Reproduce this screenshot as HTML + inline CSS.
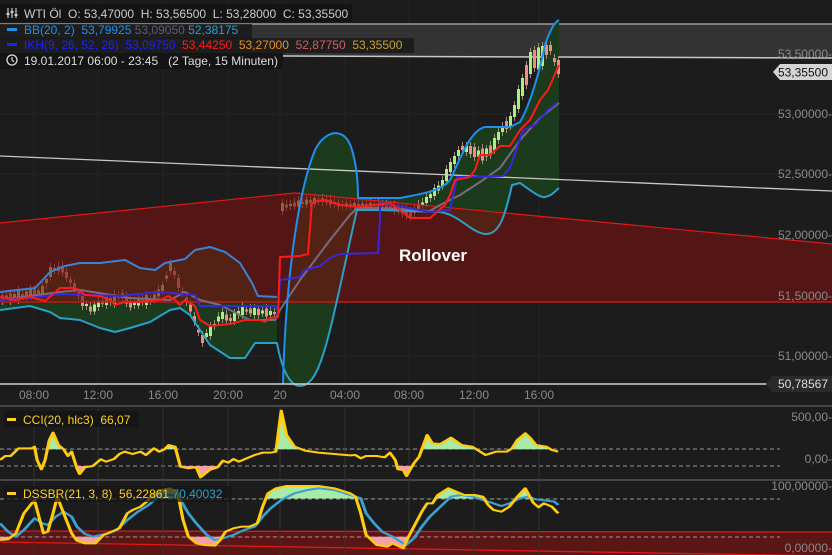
<!DOCTYPE html>
<html><head><meta charset="utf-8"><style>
html,body{margin:0;padding:0;background:#1c1c1c;}
svg{display:block;font-family:"Liberation Sans",sans-serif;}
.g{fill:#a6f27a}.p{fill:#f28c7c}
</style></head><body>
<svg width="832" height="555" viewBox="0 0 832 555" xmlns="http://www.w3.org/2000/svg">
<rect width="832" height="555" fill="#1c1c1c"/>
<g stroke="#242424" stroke-width="1">
<line x1="0" y1="114" x2="832" y2="114"/><line x1="0" y1="174" x2="832" y2="174"/><line x1="0" y1="235" x2="832" y2="235"/><line x1="0" y1="296" x2="832" y2="296"/><line x1="0" y1="356" x2="832" y2="356"/>
<line x1="34" y1="0" x2="34" y2="384"/><line x1="98" y1="0" x2="98" y2="384"/><line x1="163" y1="0" x2="163" y2="384"/><line x1="228" y1="0" x2="228" y2="384"/><line x1="280" y1="0" x2="280" y2="384"/><line x1="345" y1="0" x2="345" y2="384"/><line x1="409" y1="0" x2="409" y2="384"/><line x1="474" y1="0" x2="474" y2="384"/><line x1="539" y1="0" x2="539" y2="384"/>
</g>
<polygon points="0,24 832,24 832,58 0,55" fill="#333"/>
<line x1="0" y1="24" x2="832" y2="24" stroke="#9a9a9a" stroke-width="1.5"/>
<line x1="0" y1="55" x2="832" y2="58" stroke="#c8c8c8" stroke-width="1.5"/>
<g fill="#1c3a1c">
<path d="M0,292 L35,288 L50,272 L65,266 L80,263 L100,263 L125,260 L140,268 L155,270 L165,263 L185,259 L195,250 L210,247 L225,252 L240,263 L252,283 L258,296 L277,297 L277,343 L255,343 L245,358 L230,358 L210,345 L200,330 L190,315 L180,308 L170,310 L150,322 L130,328 L115,332 L100,328 L80,320 L60,318 L50,312 L30,306 L0,310 Z"/>
<path d="M283,384 C285,300 295,200 315,150 C325,130 345,125 352,150 C358,170 358,190 358,198 L357,210 C352,230 340,290 330,330 C320,370 312,386 300,386 C290,386 285,384 283,384 Z"/>
<path d="M358,198 L400,198 C420,194 440,192 450,180 C460,160 470,130 485,127 L510,127 L520,122 C530,105 540,70 545,45 C550,30 555,22 559,20 L559,188 C556,190 552,196 545,197 C540,198 530,190 520,183 L512,185 C505,215 500,235 485,234 C470,232 460,215 440,212 L380,210 L357,210 Z"/>
</g>
<!-- candles -->
<path fill="none" stroke="#9a8a80" stroke-width="1" d="M2.5,291v14M6.5,291v9M10.5,289v16M14.5,290v12M18.5,286v18M22.5,290v10M26.5,288v13M30.5,285v15M34.5,285v14M38.5,287v11M42.5,282v16M46.5,275v14M50.5,263v18M54.5,264v10M58.5,262v13M62.5,261v15M66.5,268v14M70.5,276v11M74.5,279v16M78.5,288v12M82.5,292v18M86.5,300v10M90.5,302v13M94.5,300v15M98.5,297v14M102.5,296v11M106.5,293v16M110.5,294v12M114.5,290v18M118.5,291v10M122.5,289v13M126.5,292v15M130.5,297v14M134.5,298v11M138.5,293v16M142.5,294v12M146.5,291v18M150.5,295v10M154.5,290v13M158.5,285v15M162.5,281v14M166.5,271v11M170.5,259v16M174.5,267v12M178.5,274v18M182.5,287v10M186.5,293v13M190.5,300v15M194.5,312v14M198.5,325v11M202.5,331v16M206.5,329v12M210.5,322v18M214.5,320v10M218.5,312v13M222.5,308v15M226.5,310v14M230.5,314v11M234.5,309v16M238.5,307v12M242.5,301v18M246.5,305v10M250.5,304v13M254.5,304v15M258.5,305v14M262.5,306v11M266.5,304v16M270.5,307v12M274.5,308v10M282.5,199v16M286.5,200v11M290.5,200v10M294.5,198v12M298.5,196v14M302.5,198v10M306.5,195v13M310.5,196v11M314.5,194v14M318.5,195v10M322.5,194v12M326.5,195v11M330.5,195v13M334.5,198v10M338.5,199v12M342.5,200v10M346.5,199v11M350.5,200v10M354.5,199v12M358.5,200v10M362.5,199v11M366.5,200v10M370.5,199v12M374.5,200v10M378.5,199v11M382.5,200v10M386.5,200v12M390.5,201v11M394.5,201v14M398.5,203v12M402.5,203v15M406.5,204v16M410.5,207v14M414.5,205v12M418.5,200v13M422.5,198v11M426.5,193v14M430.5,190v12M434.5,184v16M438.5,181v13M442.5,176v14M446.5,165v20M450.5,158v18M454.5,152v16M458.5,146v14M462.5,142v12M466.5,142v14M470.5,142v16M474.5,143v18M478.5,146v14M482.5,144v20M486.5,145v16M490.5,141v18M494.5,134v20M498.5,128v16M502.5,122v14M506.5,117v16M510.5,112v18M514.5,101v20M518.5,85v28M522.5,74v26M526.5,61v28M530.5,48v30M534.5,46v26M538.5,43v30M542.5,42v28M546.5,41v18M550.5,41v14M554.5,54v12M558.5,56v22"/>
<g>
<rect class="p" x="1" y="295" width="3" height="6"/><rect class="g" x="5" y="295.5" width="3" height="3"/><rect class="p" x="9" y="293" width="3" height="8"/><rect class="g" x="13" y="294" width="3" height="4"/><rect class="g" x="17" y="290.5" width="3" height="10"/><rect class="p" x="21" y="294" width="3" height="2"/><rect class="g" x="25" y="291.5" width="3" height="5"/><rect class="g" x="29" y="289.5" width="3" height="7"/><rect class="p" x="33" y="289.5" width="3" height="6"/><rect class="g" x="37" y="290.5" width="3" height="3"/><rect class="g" x="41" y="286" width="3" height="8"/><rect class="g" x="45" y="279" width="3" height="4"/><rect class="g" x="49" y="267" width="3" height="10"/><rect class="g" x="53" y="268" width="3" height="2"/><rect class="p" x="57" y="266" width="3" height="5"/><rect class="p" x="61" y="265.5" width="3" height="7"/><rect class="p" x="65" y="272" width="3" height="6"/><rect class="p" x="69" y="279.5" width="3" height="3"/><rect class="p" x="73" y="283" width="3" height="8"/><rect class="p" x="77" y="292" width="3" height="4"/><rect class="p" x="81" y="296" width="3" height="10"/><rect class="g" x="85" y="304" width="3" height="2"/><rect class="p" x="89" y="306.5" width="3" height="5"/><rect class="g" x="93" y="304.5" width="3" height="7"/><rect class="g" x="97" y="301" width="3" height="6"/><rect class="p" x="101" y="300.5" width="3" height="3"/><rect class="g" x="105" y="297" width="3" height="8"/><rect class="g" x="109" y="298" width="3" height="4"/><rect class="g" x="113" y="294" width="3" height="10"/><rect class="g" x="117" y="295.5" width="3" height="2"/><rect class="p" x="121" y="293" width="3" height="5"/><rect class="p" x="125" y="296.5" width="3" height="7"/><rect class="p" x="129" y="301.5" width="3" height="6"/><rect class="g" x="133" y="302" width="3" height="3"/><rect class="g" x="137" y="297.5" width="3" height="8"/><rect class="p" x="141" y="298" width="3" height="4"/><rect class="g" x="145" y="295" width="3" height="10"/><rect class="p" x="149" y="299" width="3" height="2"/><rect class="g" x="153" y="294.5" width="3" height="5"/><rect class="g" x="157" y="289.5" width="3" height="7"/><rect class="g" x="161" y="285" width="3" height="6"/><rect class="g" x="165" y="275.5" width="3" height="3"/><rect class="g" x="169" y="263" width="3" height="8"/><rect class="p" x="173" y="271" width="3" height="4"/><rect class="p" x="177" y="278" width="3" height="10"/><rect class="p" x="181" y="291" width="3" height="2"/><rect class="p" x="185" y="297.5" width="3" height="5"/><rect class="p" x="189" y="304.5" width="3" height="7"/><rect class="p" x="193" y="316" width="3" height="6"/><rect class="p" x="197" y="329.5" width="3" height="3"/><rect class="p" x="201" y="335" width="3" height="8"/><rect class="g" x="205" y="333" width="3" height="4"/><rect class="g" x="209" y="326" width="3" height="10"/><rect class="g" x="213" y="324" width="3" height="2"/><rect class="g" x="217" y="316.5" width="3" height="5"/><rect class="g" x="221" y="312" width="3" height="7"/><rect class="p" x="225" y="314.5" width="3" height="6"/><rect class="p" x="229" y="318" width="3" height="3"/><rect class="g" x="233" y="313" width="3" height="8"/><rect class="g" x="237" y="311" width="3" height="4"/><rect class="g" x="241" y="305" width="3" height="10"/><rect class="p" x="245" y="309.5" width="3" height="2"/><rect class="p" x="249" y="308.5" width="3" height="5"/><rect class="g" x="253" y="308" width="3" height="7"/><rect class="p" x="257" y="309" width="3" height="6"/><rect class="g" x="261" y="310.5" width="3" height="3"/><rect class="p" x="265" y="308.5" width="3" height="8"/><rect class="g" x="269" y="311" width="3" height="4"/><rect class="p" x="273" y="312" width="3" height="2"/>
<rect class="g" x="281" y="203" width="3" height="8"/><rect class="p" x="285" y="204.5" width="3" height="3"/><rect class="g" x="289" y="204" width="3" height="2"/><rect class="p" x="293" y="202.5" width="3" height="4"/><rect class="g" x="297" y="200.5" width="3" height="6"/><rect class="p" x="301" y="202" width="3" height="2"/><rect class="g" x="305" y="199.5" width="3" height="5"/><rect class="p" x="309" y="200" width="3" height="3"/><rect class="g" x="313" y="198" width="3" height="6"/><rect class="p" x="317" y="199.5" width="3" height="2"/><rect class="p" x="321" y="198" width="3" height="4"/><rect class="p" x="325" y="199.5" width="3" height="3"/><rect class="p" x="329" y="199.5" width="3" height="5"/><rect class="g" x="333" y="202" width="3" height="2"/><rect class="p" x="337" y="202.5" width="3" height="4"/><rect class="p" x="341" y="204" width="3" height="2"/><rect class="g" x="345" y="203.5" width="3" height="3"/><rect class="p" x="349" y="204" width="3" height="2"/><rect class="g" x="353" y="203" width="3" height="4"/><rect class="p" x="357" y="204" width="3" height="2"/><rect class="g" x="361" y="203.5" width="3" height="3"/><rect class="p" x="365" y="204" width="3" height="2"/><rect class="g" x="369" y="203" width="3" height="4"/><rect class="p" x="373" y="204" width="3" height="2"/><rect class="g" x="377" y="203.5" width="3" height="3"/><rect class="p" x="381" y="204" width="3" height="2"/><rect class="p" x="385" y="204" width="3" height="4"/><rect class="p" x="389" y="205.5" width="3" height="3"/><rect class="p" x="393" y="205" width="3" height="6"/><rect class="p" x="397" y="207" width="3" height="4"/><rect class="p" x="401" y="207" width="3" height="7"/><rect class="p" x="405" y="208" width="3" height="8"/><rect class="p" x="409" y="211" width="3" height="6"/><rect class="g" x="413" y="209" width="3" height="4"/><rect class="g" x="417" y="204.5" width="3" height="5"/><rect class="g" x="421" y="202.5" width="3" height="3"/><rect class="g" x="425" y="197" width="3" height="6"/><rect class="g" x="429" y="194" width="3" height="4"/><rect class="g" x="433" y="188" width="3" height="8"/><rect class="g" x="437" y="185.5" width="3" height="5"/><rect class="g" x="441" y="180" width="3" height="6"/><rect class="g" x="445" y="169" width="3" height="12"/><rect class="g" x="449" y="162" width="3" height="10"/><rect class="g" x="453" y="156" width="3" height="8"/><rect class="g" x="457" y="150" width="3" height="6"/><rect class="p" x="461" y="146" width="3" height="4"/><rect class="g" x="465" y="146" width="3" height="6"/><rect class="p" x="469" y="146" width="3" height="8"/><rect class="p" x="473" y="147" width="3" height="10"/><rect class="g" x="477" y="150.5" width="3" height="6"/><rect class="p" x="481" y="148.5" width="3" height="12"/><rect class="g" x="485" y="148.5" width="3" height="8"/><rect class="p" x="489" y="145.5" width="3" height="10"/><rect class="g" x="493" y="138" width="3" height="12"/><rect class="g" x="497" y="132" width="3" height="8"/><rect class="g" x="501" y="126" width="3" height="6"/><rect class="p" x="505" y="121" width="3" height="8"/><rect class="g" x="509" y="116" width="3" height="10"/><rect class="g" x="513" y="105" width="3" height="12"/><rect class="g" x="517" y="89" width="3" height="20"/><rect class="g" x="521" y="78" width="3" height="18"/><rect class="p" x="525" y="65" width="3" height="20"/><rect class="g" x="529" y="52" width="3" height="22"/><rect class="p" x="533" y="50" width="3" height="18"/><rect class="g" x="537" y="47.5" width="3" height="22"/><rect class="g" x="541" y="46" width="3" height="20"/><rect class="p" x="545" y="45" width="3" height="10"/><rect class="p" x="549" y="45" width="3" height="6"/><rect class="p" x="553" y="58" width="3" height="4"/><rect class="p" x="557" y="60" width="3" height="14"/>
</g>
<polygon points="0,223 295,193 832,244 832,302 0,302" fill="rgba(120,18,18,0.62)"/>
<polyline points="0,223 295,193 832,244" fill="none" stroke="#e01818" stroke-width="1.2"/>
<line x1="0" y1="302" x2="832" y2="302" stroke="#c01818" stroke-width="1.5"/>
<line x1="0" y1="156" x2="832" y2="191" stroke="#c8c8c8" stroke-width="1.3"/>
<g fill="none" stroke-width="2" stroke-linejoin="round">
<path stroke="#7a6a80" d="M0,300 L60,292 L80,290 L130,298 L170,300 L185,292 L200,300 L220,305 L250,320 L275,320 L280,310 L300,280 L330,240 L350,215 L357,208 L380,208 L430,211 L440,205 L460,195 L480,182 L500,168 L520,140 L540,118 L559,103"/>
<path stroke="#2aa0c8" d="M0,310 L30,306 L50,312 L60,318 L80,320 L100,328 L115,332 L130,328 L150,322 L170,310 L180,308 L190,315 L200,330 L210,345 L230,358 L245,358 L255,343 L277,343 C282,370 290,386 300,386 C312,386 320,370 330,330 C340,290 352,230 357,210 L380,210 L440,212 C460,215 470,232 485,234 C500,235 505,215 512,185 L520,183 C530,190 540,198 545,197 C552,196 556,190 559,188"/>
<path stroke="#3a82d8" d="M0,292 L35,288 L50,272 L65,266 L80,263 L100,263 L125,260 L140,268 L155,270 L165,263 L185,259 L195,250 L210,247 L225,252 L240,263 L252,283 L258,296 L277,297"/>
<path stroke="#1e90f0" d="M283,384 C285,300 295,200 315,150 C325,130 345,125 352,150 C358,170 358,190 358,198 L400,198 C420,194 440,192 450,180 C460,160 470,130 485,127 L510,127 L520,122 C530,105 540,70 545,45 C550,30 555,22 559,20"/>
<path stroke="#3a28d8" d="M0,300 L30,298 L60,294 L90,295 L120,296 L160,292 L195,295 L200,306 L275,306 L278,310 L280,280 L300,277 L305,270 L320,266 L330,258 L340,254 L378,253 L380,220 L380,203 L403,207 L430,212 L450,210 L457,177 L503,176 L510,168 L523,130 L535,125 L548,110 L557,103"/>
<path stroke="#ff1a1a" d="M0,297 L15,300 L30,297 L45,301 L60,288 L75,288 L85,295 L100,296 L110,300 L115,305 L125,302 L140,302 L160,300 L168,296 L175,300 L180,305 L185,300 L195,306 L200,320 L210,326 L230,324 L245,320 L260,320 L265,322 L270,318 L278,317 L280,257 L300,256 L308,254 L312,202 L325,200 L340,205 L358,207 L390,203 L400,210 L410,218 L430,218 L445,205 L450,195 L455,180 L470,177 L475,170 L480,155 L490,155 L500,146 L510,146 L520,130 L530,120 L540,100 L548,90 L559,65"/>
</g>
<text x="399" y="261" fill="#fff" font-size="17" font-weight="bold">Rollover</text>
<rect x="0" y="4" width="352" height="18" fill="#141414"/>
<rect x="0" y="24" width="252" height="15" fill="#181818" opacity=".8"/>
<rect x="0" y="38" width="414" height="15" fill="#181818" opacity=".8"/>
<rect x="0" y="53" width="283" height="16" fill="#141414"/>
<g font-size="12">
<g stroke="#ccc" stroke-width="1.2"><line x1="8" y1="8" x2="8" y2="18"/><line x1="12" y1="8" x2="12" y2="18"/><line x1="16" y1="8" x2="16" y2="18"/></g>
<g fill="#ccc"><rect x="6.5" y="13" width="3" height="2"/><rect x="10.5" y="11" width="3" height="2"/><rect x="14.5" y="14" width="3" height="2"/></g>
<text x="24" y="18" fill="#ccc">WTI Öl&#160; O: 53,47000&#160; H: 53,56500&#160; L: 53,28000&#160; C: 53,35500</text>
<rect x="7" y="28" width="10" height="3" fill="#1e90f0"/>
<text x="24" y="34" fill="#1e90f0">BB(20, 2)&#160; 53,79925 <tspan fill="#5c5c7a">53,09050</tspan> <tspan fill="#2aa0c8">52,38175</tspan></text>
<rect x="7" y="43" width="10" height="3" fill="#2020ff"/>
<text x="24" y="49" fill="#2020ff">IKH(9, 26, 52, 26)&#160; 53,09750 <tspan fill="#ff1a1a">&#160;53,44250</tspan> <tspan fill="#e89020">&#160;53,27000</tspan> <tspan fill="#d06060">&#160;52,87750</tspan> <tspan fill="#c8a030">&#160;53,35500</tspan></text>
<circle cx="12" cy="60" r="5" fill="none" stroke="#ddd" stroke-width="1.3"/><path d="M12,57 V60 L14,62" fill="none" stroke="#ddd" stroke-width="1.2"/>
<text x="24" y="65" fill="#ddd">19.01.2017 06:00 - 23:45&#160;&#160; (2 Tage, 15 Minuten)</text>
</g>
<g font-size="12" fill="#8a8a8a" text-anchor="end">
<text x="832" y="58">53,50000-</text><text x="832" y="118">53,00000-</text><text x="832" y="178">52,50000-</text><text x="832" y="239">52,00000-</text><text x="832" y="300">51,50000-</text><text x="832" y="360">51,00000-</text>
</g>
<path d="M773,72 L780,64 L832,64 L832,80 L780,80 Z" fill="#d4d4d4"/>
<text x="828" y="76.5" fill="#111" font-size="12" text-anchor="end">53,35500</text>
<line x1="0" y1="384" x2="832" y2="384" stroke="#d0d0d0" stroke-width="1.5"/>
<path d="M766,384 L772,376 L832,376 L832,392 L772,392 Z" fill="#2a2a2a"/>
<text x="828" y="388" fill="#ddd" font-size="12" text-anchor="end">50,78567</text>
<g font-size="12" fill="#8a8a8a" text-anchor="middle">
<text x="34" y="399">08:00</text><text x="98" y="399">12:00</text><text x="163" y="399">16:00</text><text x="228" y="399">20:00</text><text x="280" y="399">20</text><text x="345" y="399">04:00</text><text x="409" y="399">08:00</text><text x="474" y="399">12:00</text><text x="539" y="399">16:00</text>
</g>
<line x1="0" y1="406" x2="832" y2="406" stroke="#555" stroke-width="1.5"/>
<line x1="0" y1="480" x2="832" y2="480" stroke="#555" stroke-width="1.5"/>
<polygon points="0,531 832,532 832,555 0,555" fill="#5a1515"/>
<line x1="0" y1="531" x2="832" y2="532" stroke="#e01818" stroke-width="1.3"/>
<line x1="0" y1="542" x2="832" y2="556" stroke="#e01818" stroke-width="1.3"/>
<g stroke="#999" stroke-dasharray="4,3" stroke-width="1">
<line x1="0" y1="449" x2="780" y2="449"/><line x1="0" y1="466" x2="780" y2="466"/>
<line x1="0" y1="499" x2="780" y2="499"/><line x1="0" y1="537" x2="780" y2="537"/>
</g>
<g stroke="#333"><line x1="34" y1="406" x2="34" y2="555"/><line x1="98" y1="406" x2="98" y2="555"/><line x1="163" y1="406" x2="163" y2="555"/><line x1="228" y1="406" x2="228" y2="555"/><line x1="280" y1="406" x2="280" y2="555"/><line x1="345" y1="406" x2="345" y2="555"/><line x1="409" y1="406" x2="409" y2="555"/><line x1="474" y1="406" x2="474" y2="555"/><line x1="539" y1="406" x2="539" y2="555"/></g>
<defs>
<clipPath id="cA"><rect x="0" y="0" width="2000" height="208"/></clipPath>
<clipPath id="cB"><rect x="0" y="258" width="2000" height="300"/></clipPath>
<clipPath id="dA"><rect x="0" y="0" width="2000" height="356"/></clipPath>
<clipPath id="dB"><rect x="0" y="470" width="2000" height="100"/></clipPath>
</defs>
<g transform="translate(0,380) scale(0.5306,0.3333)">
<path clip-path="url(#cA)" fill="#a8eaa8" d="M0,240 L10,228 L20,228 L35,205 L60,205 L65,200 L70,240 L78,268 L85,240 L93,180 L100,158 L110,195 L120,208 L128,228 L135,215 L145,265 L150,282 L160,262 L175,258 L190,238 L200,245 L215,237 L225,222 L235,215 L250,222 L265,215 L275,225 L290,205 L300,215 L310,208 L318,195 L330,200 L340,260 L355,265 L370,262 L378,292 L395,270 L410,262 L420,242 L430,248 L440,237 L450,245 L465,235 L480,225 L495,218 L510,218 L520,215 L530,92 L540,165 L555,200 L575,212 L600,218 L630,222 L660,226 L670,225 L680,235 L690,228 L710,228 L725,232 L735,218 L745,240 L750,268 L760,270 L766,288 L780,250 L790,230 L805,165 L815,190 L830,192 L850,173 L870,195 L890,200 L900,210 L915,225 L925,220 L935,215 L955,215 L965,205 L975,180 L990,160 L1000,175 L1010,195 L1030,200 L1040,210 L1052,215 L1052,208 L0,208 Z"/>
<path clip-path="url(#cB)" fill="#f4a0a8" d="M0,240 L10,228 L20,228 L35,205 L60,205 L65,200 L70,240 L78,268 L85,240 L93,180 L100,158 L110,195 L120,208 L128,228 L135,215 L145,265 L150,282 L160,262 L175,258 L190,238 L200,245 L215,237 L225,222 L235,215 L250,222 L265,215 L275,225 L290,205 L300,215 L310,208 L318,195 L330,200 L340,260 L355,265 L370,262 L378,292 L395,270 L410,262 L420,242 L430,248 L440,237 L450,245 L465,235 L480,225 L495,218 L510,218 L520,215 L530,92 L540,165 L555,200 L575,212 L600,218 L630,222 L660,226 L670,225 L680,235 L690,228 L710,228 L725,232 L735,218 L745,240 L750,268 L760,270 L766,288 L780,250 L790,230 L805,165 L815,190 L830,192 L850,173 L870,195 L890,200 L900,210 L915,225 L925,220 L935,215 L955,215 L965,205 L975,180 L990,160 L1000,175 L1010,195 L1030,200 L1040,210 L1052,215 L1052,258 L0,258 Z"/>
<path clip-path="url(#dA)" fill="#a8eaa8" d="M0,480 L15,478 L30,460 L45,400 L55,380 L65,360 L75,420 L82,460 L90,455 L100,400 L108,350 L115,380 L125,420 L135,460 L145,482 L160,490 L180,490 L195,465 L210,455 L225,445 L240,400 L250,390 L265,380 L280,360 L290,340 L305,330 L320,325 L335,340 L345,420 L355,470 L370,490 L385,495 L405,497 L415,480 L425,455 L440,445 L455,440 L470,440 L485,430 L495,380 L505,340 L520,325 L540,318 L600,318 L630,325 L660,340 L670,350 L680,400 L690,465 L710,495 L730,500 L740,490 L760,505 L770,470 L780,440 L795,395 L805,370 L815,370 L825,345 L845,325 L860,335 L875,345 L895,345 L910,350 L920,375 L930,390 L945,395 L960,380 L975,350 L990,325 L1005,368 L1015,382 L1025,370 L1040,380 L1052,400 L1052,356 L0,356 Z"/>
<path clip-path="url(#dB)" fill="#f4a0a8" d="M0,480 L15,478 L30,460 L45,400 L55,380 L65,360 L75,420 L82,460 L90,455 L100,400 L108,350 L115,380 L125,420 L135,460 L145,482 L160,490 L180,490 L195,465 L210,455 L225,445 L240,400 L250,390 L265,380 L280,360 L290,340 L305,330 L320,325 L335,340 L345,420 L355,470 L370,490 L385,495 L405,497 L415,480 L425,455 L440,445 L455,440 L470,440 L485,430 L495,380 L505,340 L520,325 L540,318 L600,318 L630,325 L660,340 L670,350 L680,400 L690,465 L710,495 L730,500 L740,490 L760,505 L770,470 L780,440 L795,395 L805,370 L815,370 L825,345 L845,325 L860,335 L875,345 L895,345 L910,350 L920,375 L930,390 L945,395 L960,380 L975,350 L990,325 L1005,368 L1015,382 L1025,370 L1040,380 L1052,400 L1052,470 L0,470 Z"/>
<path fill="none" stroke="#3aa0d0" stroke-width="6" stroke-linejoin="round" d="M0,430 L15,455 L30,470 L45,450 L65,415 L80,430 L90,435 L105,410 L120,395 L135,410 L145,440 L160,462 L175,470 L190,465 L205,460 L220,450 L240,420 L260,395 L280,375 L295,355 L310,345 L325,345 L340,360 L355,400 L370,430 L390,465 L405,480 L420,475 L440,465 L460,450 L480,440 L495,410 L510,385 L530,360 L555,340 L580,330 L600,325 L630,330 L660,345 L680,355 L690,400 L705,430 L720,455 L740,470 L755,485 L765,495 L780,475 L795,440 L810,410 L830,380 L850,350 L870,345 L890,350 L910,360 L930,370 L945,378 L960,370 L980,355 L995,350 L1010,358 L1030,362 L1045,365 L1052,375"/>
<path fill="none" stroke="#ffcc10" stroke-width="6" stroke-linejoin="round" d="M0,240 L10,228 L20,228 L35,205 L60,205 L65,200 L70,240 L78,268 L85,240 L93,180 L100,158 L110,195 L120,208 L128,228 L135,215 L145,265 L150,282 L160,262 L175,258 L190,238 L200,245 L215,237 L225,222 L235,215 L250,222 L265,215 L275,225 L290,205 L300,215 L310,208 L318,195 L330,200 L340,260 L355,265 L370,262 L378,292 L395,270 L410,262 L420,242 L430,248 L440,237 L450,245 L465,235 L480,225 L495,218 L510,218 L520,215 L530,92 L540,165 L555,200 L575,212 L600,218 L630,222 L660,226 L670,225 L680,235 L690,228 L710,228 L725,232 L735,218 L745,240 L750,268 L760,270 L766,288 L780,250 L790,230 L805,165 L815,190 L830,192 L850,173 L870,195 L890,200 L900,210 L915,225 L925,220 L935,215 L955,215 L965,205 L975,180 L990,160 L1000,175 L1010,195 L1030,200 L1040,210 L1052,215"/>
<path fill="none" stroke="#ffcc10" stroke-width="6" stroke-linejoin="round" d="M0,480 L15,478 L30,460 L45,400 L55,380 L65,360 L75,420 L82,460 L90,455 L100,400 L108,350 L115,380 L125,420 L135,460 L145,482 L160,490 L180,490 L195,465 L210,455 L225,445 L240,400 L250,390 L265,380 L280,360 L290,340 L305,330 L320,325 L335,340 L345,420 L355,470 L370,490 L385,495 L405,497 L415,480 L425,455 L440,445 L455,440 L470,440 L485,430 L495,380 L505,340 L520,325 L540,318 L600,318 L630,325 L660,340 L670,350 L680,400 L690,465 L710,495 L730,500 L740,490 L760,505 L770,470 L780,440 L795,395 L805,370 L815,370 L825,345 L845,325 L860,335 L875,345 L895,345 L910,350 L920,375 L930,390 L945,395 L960,380 L975,350 L990,325 L1005,368 L1015,382 L1025,370 L1040,380 L1052,400"/>
</g>
<g font-size="12" fill="#8a8a8a" text-anchor="end">
<text x="832" y="421">500,00-</text><text x="832" y="463">0,00-</text>
<text x="832" y="490">100,00000-</text><text x="832" y="552">0,00000-</text>
</g>
<rect x="4" y="411" width="134" height="16" fill="#151515"/>
<rect x="7" y="418" width="9" height="3" fill="#ffd020"/>
<text x="23" y="424" font-size="12" fill="#ffd020">CCI(20, hlc3)&#160; 66,07</text>
<rect x="4" y="486" width="228" height="16" fill="#151515" opacity=".7"/>
<rect x="7" y="492" width="9" height="3" fill="#ffd020"/>
<text x="23" y="498" font-size="12" fill="#ffd020">DSSBR(21, 3, 8)&#160; 56,22861 <tspan fill="#2aa0c8">70,40032</tspan></text>
</svg>
</body></html>
